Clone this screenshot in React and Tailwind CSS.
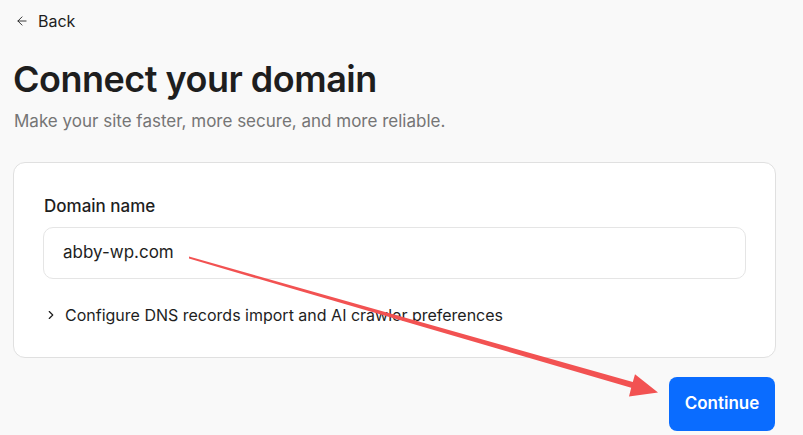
import { ArrowLeft, ChevronRight } from 'lucide-react';

export default function App() {
  return (
    <div className="relative min-h-[435px] w-full bg-[#f9f9f9] text-[#1e1e1e] [font-family:Inter,'Liberation_Sans',sans-serif] overflow-hidden">
      <div className="px-[13px] pt-[11px]">
        <button className="flex items-center gap-[9px] text-[16px] text-[#1e1e1e] h-[20px]">
          <ArrowLeft size={14} strokeWidth={1.5} className="ml-[2px]" />
          <span>Back</span>
        </button>

        <h1 className="mt-[26px] text-[36px] leading-[44px] font-semibold tracking-[-0.5px] text-[#1e1e1e]">
          Connect your domain
        </h1>
        <p className="mt-[9px] text-[17px] leading-[22px] text-[#757575] ml-[1px]">
          Make your site faster, more secure, and more reliable.
        </p>

        <div className="mt-[30px] w-[763px] rounded-[12px] border border-[#e0e0e0] bg-white px-[29px] pt-[32px] pb-[32px]">
          <label className="block text-[17px] leading-[22px] font-medium text-[#1e1e1e] ml-[1px]">
            Domain name
          </label>
          <div className="mt-[10px] flex h-[52px] items-center rounded-[10px] border border-[#e5e5e5] bg-white px-[19px] text-[17px] text-[#1e1e1e]">
            abby-wp.com
          </div>
          <div className="mt-[26px] flex items-center gap-[7px] text-[16px] leading-[20px] text-[#1e1e1e]">
            <ChevronRight size={14} strokeWidth={2} className="ml-[1px]" />
            <span>Configure DNS records import and AI crawler preferences</span>
          </div>
        </div>

        <div className="mt-[19px] flex justify-end w-[762px]">
          <button className="h-[54px] w-[106px] rounded-[8px] bg-[#0a6cff] text-[17px] font-semibold text-white">
            Continue
          </button>
        </div>
      </div>

      <svg className="pointer-events-none absolute left-0 top-0" width="803" height="435">
        <polygon
          points="189,256.6 632.8,381.9 635,374.2 658,392.5 629,396.4 631.2,387.7 189,258.6"
          fill="#f25252"
        />
      </svg>
    </div>
  );
}
